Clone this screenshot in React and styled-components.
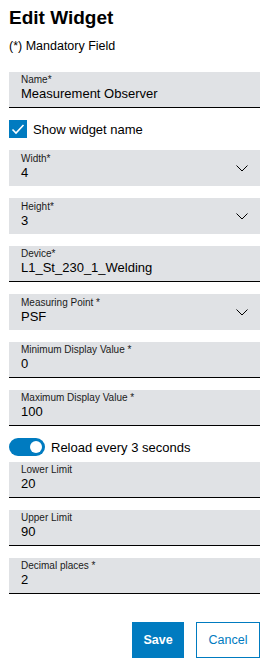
import React from "react";
import styled, { createGlobalStyle } from "styled-components";

const Global = createGlobalStyle`
  html, body { margin: 0; padding: 0; background: #fff; }
  body { font-family: "Liberation Sans", Arial, sans-serif; color: #000; }
  * { box-sizing: border-box; }
`;

const Page = styled.div`
  width: 272px;
  padding: 6px 12px 0 9px;
  display: flex;
  flex-direction: column;
`;

const Title = styled.h1`
  margin: 0;
  font-size: 19px;
  line-height: 24px;
  font-weight: 700;
`;

const Note = styled.div`
  margin-top: 8px;
  font-size: 12.5px;
  line-height: 16px;
`;

const Form = styled.div`
  margin-top: 18px;
  display: flex;
  flex-direction: column;
  gap: 12px;
`;

const Field = styled.div`
  position: relative;
  height: 36px;
  background: #e0e2e5;
  padding: ${(p) => (p.$select ? "3px 12px 0" : "2px 12px 0")};
  border-bottom: ${(p) => (p.$select ? "none" : "1px solid #000")};
`;

const Label = styled.div`
  font-size: 10px;
  line-height: 12px;
  color: #1a1a1a;
`;

const Value = styled.div`
  font-size: 13px;
  line-height: 16px;
  color: #000;
`;

const Chevron = styled.svg`
  position: absolute;
  right: 12px;
  top: 15px;
`;

const Row = styled.div`
  display: flex;
  align-items: center;
  gap: 6px;
  height: 18px;
  font-size: 13px;
  margin-bottom: ${(p) => (p.$tight ? "-6px" : "0")};
`;

const Box = styled.span`
  width: 18px;
  height: 18px;
  background: #007bc0;
  display: flex;
  align-items: center;
  justify-content: center;
`;

const Toggle = styled.span`
  position: relative;
  width: 36px;
  height: 18px;
  border-radius: 9px;
  background: #007bc0;
  &::after {
    content: "";
    position: absolute;
    right: 3px;
    top: 3px;
    width: 12px;
    height: 12px;
    border-radius: 50%;
    background: #fff;
  }
`;

const Actions = styled.div`
  margin-top: 28px;
  display: flex;
  justify-content: flex-end;
  gap: 12px;
`;

const Button = styled.button`
  height: 36px;
  padding: 0;
  width: ${(p) => (p.$primary ? "52px" : "64px")};
  font-family: inherit;
  font-size: 12.5px;
  font-weight: ${(p) => (p.$primary ? 700 : 400)};
  background: ${(p) => (p.$primary ? "#007bc0" : "#fff")};
  color: ${(p) => (p.$primary ? "#fff" : "#007bc0")};
  border: 1px solid #007bc0;
  cursor: pointer;
`;

const ChevronIcon = () => (
  <Chevron width="12" height="7" viewBox="0 0 12 7">
    <path d="M0.5 0.5 L6 6 L11.5 0.5" fill="none" stroke="#000" strokeWidth="1" />
  </Chevron>
);

const TextField = ({ label, value }) => (
  <Field>
    <Label>{label}</Label>
    <Value>{value}</Value>
  </Field>
);

const SelectField = ({ label, value }) => (
  <Field $select>
    <Label>{label}</Label>
    <Value>{value}</Value>
    <ChevronIcon />
  </Field>
);

export default function App() {
  return (
    <>
      <Global />
      <Page>
        <Title>Edit Widget</Title>
        <Note>(*) Mandatory Field</Note>
        <Form>
          <TextField label="Name*" value="Measurement Observer" />
          <Row>
            <Box>
              <svg width="14" height="12" viewBox="0 0 14 12">
                <path d="M1.5 6.5 L5 10 L12.5 2" fill="none" stroke="#fff" strokeWidth="1.6" />
              </svg>
            </Box>
            Show widget name
          </Row>
          <SelectField label="Width*" value="4" />
          <SelectField label="Height*" value="3" />
          <TextField label="Device*" value="L1_St_230_1_Welding" />
          <SelectField label="Measuring Point *" value="PSF" />
          <TextField label="Minimum Display Value *" value="0" />
          <TextField label="Maximum Display Value *" value="100" />
          <Row $tight>
            <Toggle />
            Reload every 3 seconds
          </Row>
          <TextField label="Lower Limit" value="20" />
          <TextField label="Upper Limit" value="90" />
          <TextField label="Decimal places *" value="2" />
        </Form>
        <Actions>
          <Button $primary>Save</Button>
          <Button>Cancel</Button>
        </Actions>
      </Page>
    </>
  );
}
